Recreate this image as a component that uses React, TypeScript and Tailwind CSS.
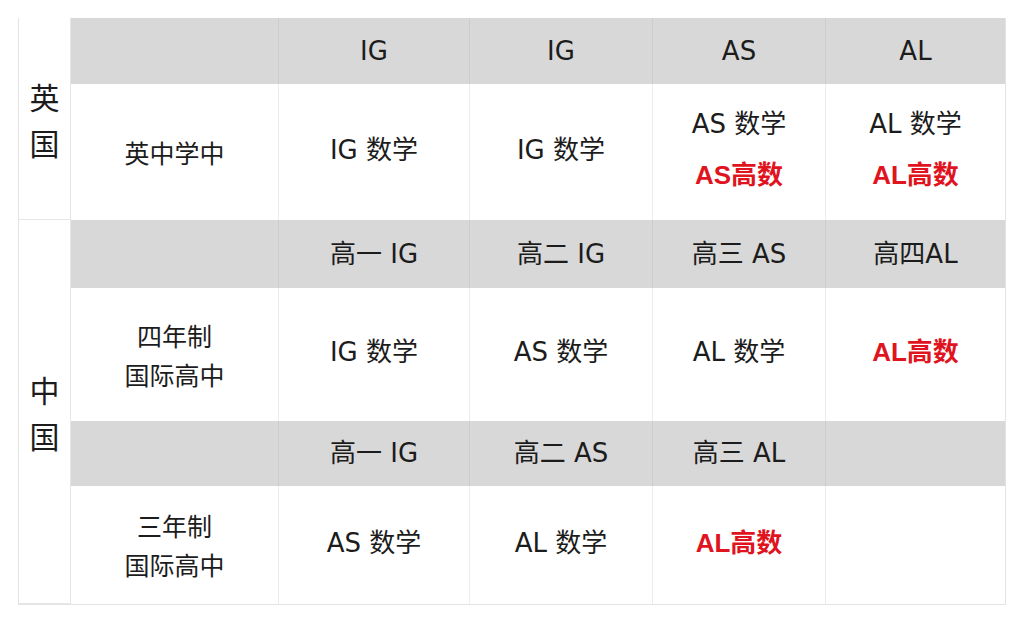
import React from 'react';

const latin = "font-['DejaVu_Sans','Noto_Sans_CJK_SC',sans-serif]";
const bold = "font-['Liberation_Sans','Noto_Sans_CJK_SC',sans-serif] font-bold text-[#e0141e]";

function Head({ children, last }: { children?: React.ReactNode; last?: boolean }) {
  return (
    <div
      className={`flex items-center justify-center bg-[#d8d8d8] text-[26px] text-[#1c1c1c] ${latin} ${
        last ? '' : 'border-r border-[#cdcdcd]'
      }`}
    >
      {children}
    </div>
  );
}

function Cell({ children, last }: { children?: React.ReactNode; last?: boolean }) {
  return (
    <div
      className={`flex flex-col items-center justify-center gap-[12px] pb-[4px] bg-white text-[26px] text-[#1c1c1c] ${latin} ${
        last ? '' : 'border-r border-[#ececec]'
      }`}
    >
      {children}
    </div>
  );
}

function School({ lines }: { lines: string[] }) {
  return (
    <div className="flex flex-col items-center justify-center border-r border-[#ececec] bg-white text-[25px] leading-[39px] text-[#1c1c1c] font-['Noto_Sans_CJK_SC',sans-serif]">
      {lines.map((l) => (
        <span key={l}>{l}</span>
      ))}
    </div>
  );
}

function Country({ text, span }: { text: string; span: string }) {
  return (
    <div
      className={`${span} flex flex-col items-center justify-center border-r border-b border-[#e6e6e6] bg-white text-[30px] leading-[46px] text-[#1c1c1c] font-['Noto_Sans_CJK_SC',sans-serif]`}
    >
      {text.split('').map((c) => (
        <span key={c}>{c}</span>
      ))}
    </div>
  );
}

export default function App() {
  return (
    <div className="h-[630px] w-[1024px] bg-white pt-[18px] pl-[18px]">
      <div className="grid w-fit grid-cols-[52px_208px_191px_183px_173px_179px] grid-rows-[66px_136px_68px_133px_65px_118px] border border-[#e3e3e3] border-t-0">
        <Country text="英国" span="row-span-2" />
        <Head />
        <Head>IG</Head>
        <Head>IG</Head>
        <Head>AS</Head>
        <Head last>AL</Head>

        <School lines={['英中学中']} />
        <Cell>IG 数学</Cell>
        <Cell>IG 数学</Cell>
        <Cell>
          <span>AS 数学</span>
          <span className={bold}>AS高数</span>
        </Cell>
        <Cell last>
          <span>AL 数学</span>
          <span className={bold}>AL高数</span>
        </Cell>

        <Country text="中国" span="row-span-4" />
        <Head />
        <Head>高一 IG</Head>
        <Head>高二 IG</Head>
        <Head>高三 AS</Head>
        <Head last>高四AL</Head>

        <School lines={['四年制', '国际高中']} />
        <Cell>IG 数学</Cell>
        <Cell>AS 数学</Cell>
        <Cell>AL 数学</Cell>
        <Cell last>
          <span className={bold}>AL高数</span>
        </Cell>

        <Head />
        <Head>高一 IG</Head>
        <Head>高二 AS</Head>
        <Head>高三 AL</Head>
        <Head last />

        <School lines={['三年制', '国际高中']} />
        <Cell>AS 数学</Cell>
        <Cell>AL 数学</Cell>
        <Cell>
          <span className={bold}>AL高数</span>
        </Cell>
        <Cell last />
      </div>
    </div>
  );
}
